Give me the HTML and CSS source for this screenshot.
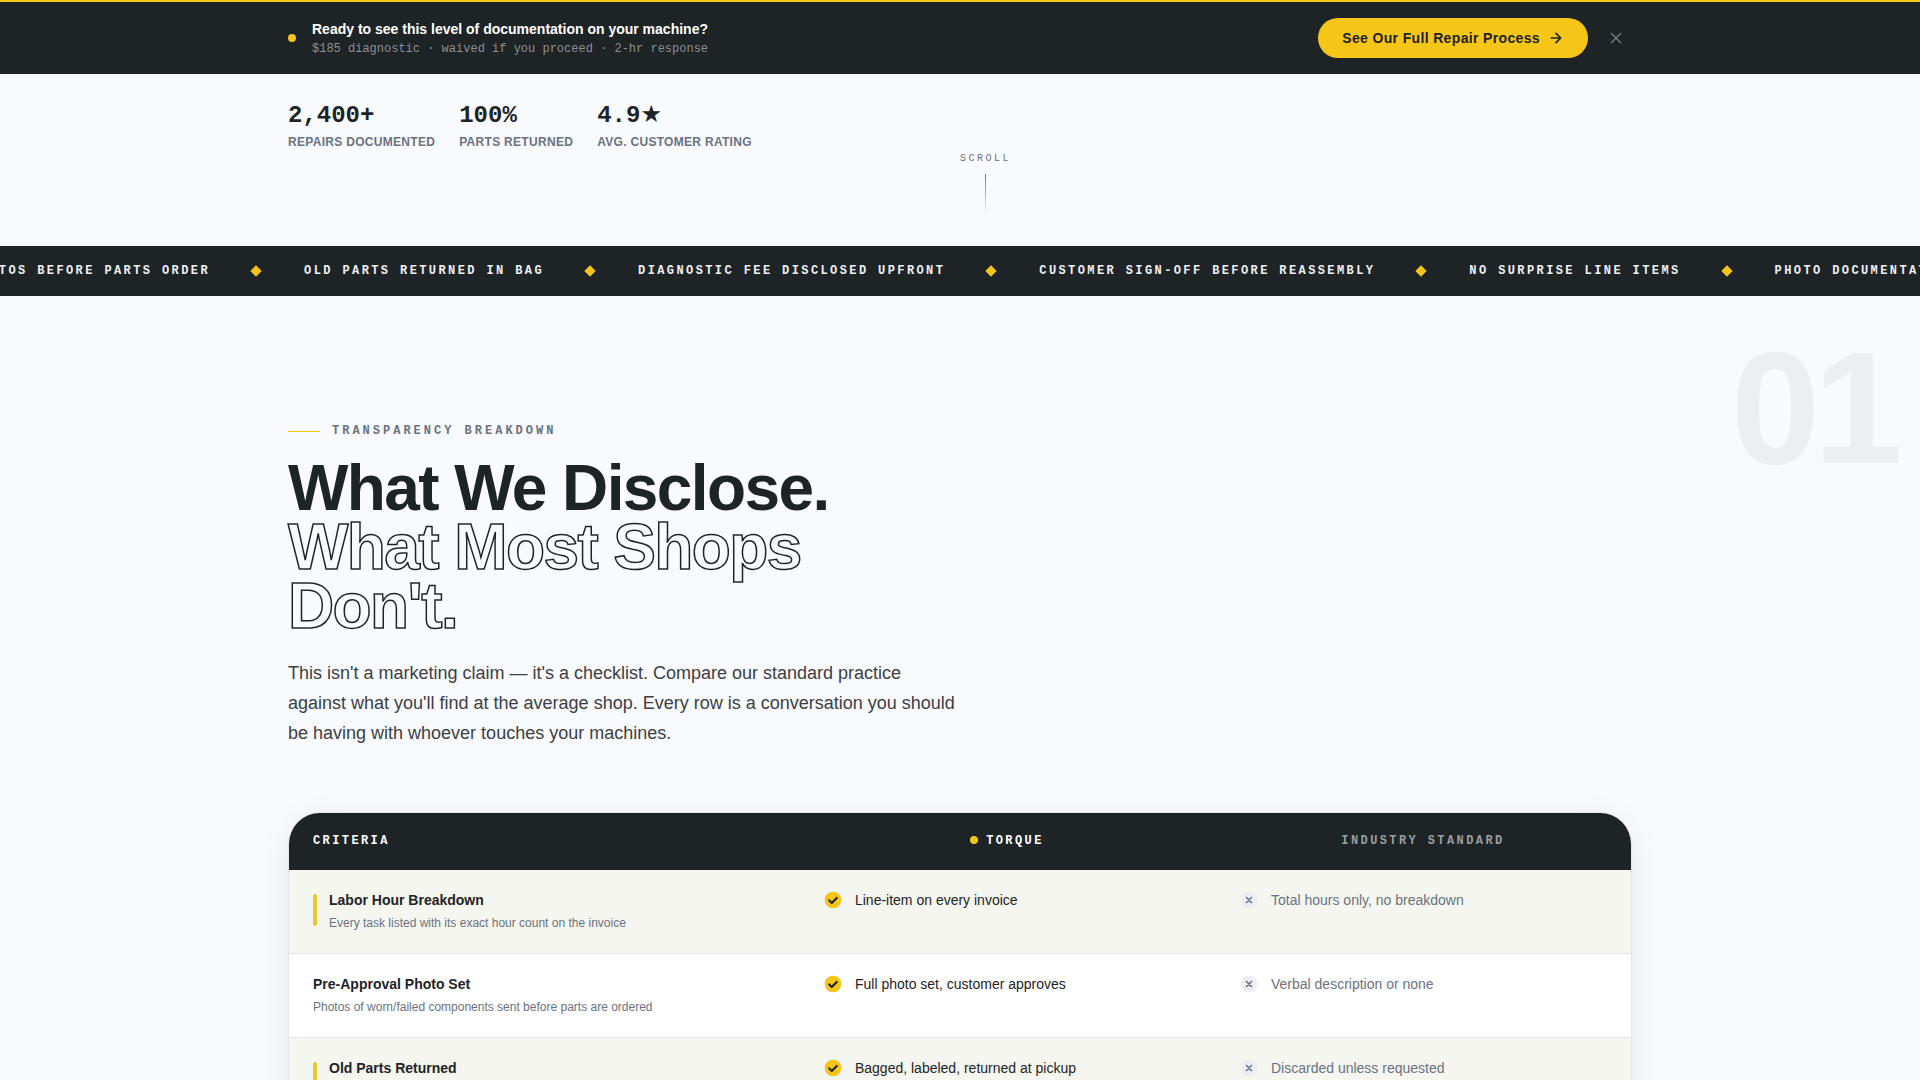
FILE: index.html
```html
<!DOCTYPE html>
<html lang="en">
<head>
  <meta charset="UTF-8" />
  <meta name="viewport" content="width=device-width, initial-scale=1" />
  <title>Torque - Transparency Breakdown</title>
  <link rel="stylesheet" href="styles.css">
</head>
<body>
  <aside class="banner">
    <div class="container banner-inner">
      <span class="dot banner-dot"></span>
      <div class="banner-text">
        <p class="banner-title">Ready to see this level of documentation on your machine?</p>
        <p class="banner-sub">$185 diagnostic · waived if you proceed · 2-hr response</p>
      </div>
      <a class="btn" href="#process">See Our Full Repair Process
        <svg width="16" height="16" viewBox="0 0 24 24" fill="none" stroke="currentColor" stroke-width="2.5" stroke-linecap="round" stroke-linejoin="round"><path d="M5 12h14M12 5l7 7-7 7"/></svg>
      </a>
      <button type="button" class="close" aria-label="Dismiss">
        <svg width="18" height="18" viewBox="0 0 24 24" fill="none" stroke="currentColor" stroke-width="2" stroke-linecap="round"><path d="M6 6l12 12M18 6L6 18"/></svg>
      </button>
    </div>
  </aside>

  <section class="hero">
    <div class="container">
      <ul class="stats">
        <li><strong>2,400+</strong><span>Repairs Documented</span></li>
        <li><strong>100%</strong><span>Parts Returned</span></li>
        <li><strong>4.9★</strong><span>Avg. Customer Rating</span></li>
      </ul>
    </div>
    <div class="scroll-hint">
      <span>SCROLL</span>
      <i class="scroll-line"></i>
    </div>
  </section>

  <div class="marquee">
    <ul class="marquee-track">
      <li>Photos before parts order</li>
      <li>Old parts returned in bag</li>
      <li>Diagnostic fee disclosed upfront</li>
      <li>Customer sign-off before reassembly</li>
      <li>No surprise line items</li>
      <li>Photo documentation</li>
    </ul>
  </div>

  <section class="disclose">
    <span class="section-num" aria-hidden="true">01</span>
    <div class="container">
      <header class="intro">
        <p class="eyebrow">Transparency Breakdown</p>
        <h2>What We Disclose. <span class="outline">What Most Shops Don't.</span></h2>
        <p class="lead">This isn't a marketing claim — it's a checklist. Compare our standard practice against what you'll find at the average shop. Every row is a conversation you should be having with whoever touches your machines.</p>
      </header>

      <div class="card">
        <table>
          <thead>
            <tr>
              <th scope="col" class="col-criteria">Criteria</th>
              <th scope="col" class="col-shop"><span class="dot"></span>Torque</th>
              <th scope="col" class="col-industry">Industry Standard</th>
            </tr>
          </thead>
          <tbody>
            <tr class="key">
              <td><div class="criteria"><div><h3>Labor Hour Breakdown</h3><p>Every task listed with its exact hour count on the invoice</p></div></div></td>
              <td><div class="answer"><svg class="icon" viewBox="0 0 24 24"><use href="#check"/></svg>Line-item on every invoice</div></td>
              <td><div class="answer other"><svg class="icon" viewBox="0 0 24 24"><use href="#cross"/></svg>Total hours only, no breakdown</div></td>
            </tr>
            <tr>
              <td><div class="criteria"><div><h3>Pre-Approval Photo Set</h3><p>Photos of worn/failed components sent before parts are ordered</p></div></div></td>
              <td><div class="answer"><svg class="icon" viewBox="0 0 24 24"><use href="#check"/></svg>Full photo set, customer approves</div></td>
              <td><div class="answer other"><svg class="icon" viewBox="0 0 24 24"><use href="#cross"/></svg>Verbal description or none</div></td>
            </tr>
            <tr class="key">
              <td><div class="criteria"><div><h3>Old Parts Returned</h3><p>Every replaced part bagged and labeled for you</p></div></div></td>
              <td><div class="answer"><svg class="icon" viewBox="0 0 24 24"><use href="#check"/></svg>Bagged, labeled, returned at pickup</div></td>
              <td><div class="answer other"><svg class="icon" viewBox="0 0 24 24"><use href="#cross"/></svg>Discarded unless requested</div></td>
            </tr>
          </tbody>
        </table>
      </div>
    </div>
  </section>

  <svg width="0" height="0" class="sprite">
    <symbol id="check" viewBox="0 0 24 24">
      <circle cx="12" cy="12" r="10" fill="#f5c518"/>
      <path d="M7.5 12.5l3 3 6-6" fill="none" stroke="#1e2326" stroke-width="2.5" stroke-linecap="round" stroke-linejoin="round"/>
    </symbol>
    <symbol id="cross" viewBox="0 0 24 24">
      <circle cx="12" cy="12" r="10" fill="#ededf2"/>
      <path d="M9 9l6 6M15 9l-6 6" fill="none" stroke="#6b7280" stroke-width="2" stroke-linecap="round"/>
    </symbol>
  </svg>
</body>
</html>
```
FILE: styles.css
```css
* { box-sizing: border-box; margin: 0; padding: 0; }
body { font-family: "Liberation Sans", Arial, sans-serif; background: #f8fafe; color: #1e2326; overflow-x: hidden; }
ul { list-style: none; }

.container { max-width: 1440px; margin: 0 auto; padding: 0 48px; }
.dot { display: inline-block; width: 8px; height: 8px; border-radius: 50%; background: #f5c518; }

/* top banner */
.banner { background: #1e2326; border-top: 2px solid #f5c518; }
.banner-inner { display: flex; align-items: center; height: 72px; }
.banner-dot { margin-right: 16px; }
.banner-text { flex: 1; }
.banner-title { font-size: 14px; line-height: 22px; font-weight: 700; color: #fff; }
.banner-sub { font-family: "Liberation Mono", monospace; font-size: 12px; line-height: 18px; color: #8b8f92; }
.btn { display: flex; align-items: center; gap: 8px; height: 40px; padding: 0 24px; border-radius: 20px; background: #f5c518; color: #1e2326; font-size: 14px; font-weight: 700; letter-spacing: 0.025em; text-decoration: none; }
.close { display: flex; align-items: center; justify-content: center; width: 32px; height: 32px; margin-left: 12px; border: 0; background: none; color: #74787a; cursor: pointer; }

/* hero */
.hero { padding: 25px 0 32px; }
.stats { display: flex; gap: 24px; }
.stats strong { display: block; font-family: "Liberation Mono", "DejaVu Sans", monospace; font-size: 24px; line-height: 34px; }
.stats span { display: block; font-size: 12px; line-height: 19px; font-weight: 700; letter-spacing: 0.025em; color: #6b7280; text-transform: uppercase; }
.scroll-hint { display: flex; flex-direction: column; align-items: center; gap: 8px; width: max-content; margin-left: 50%; }
.scroll-hint span { font-family: "Liberation Mono", monospace; font-size: 10px; line-height: 14px; letter-spacing: 0.25em; color: #6b7280; }
.scroll-line { width: 1px; height: 40px; background: linear-gradient(#6b7280, transparent); }

/* marquee */
.marquee { overflow: hidden; background: #1e2326; }
.marquee-track { display: flex; align-items: center; height: 50px; margin-left: -30px; }
.marquee-track li { display: flex; align-items: center; flex: none; font-family: "Liberation Mono", monospace; font-size: 12px; font-weight: 700; letter-spacing: 0.2em; color: #eef0f4; text-transform: uppercase; white-space: nowrap; }
.marquee-track li::after { content: ""; width: 8px; height: 8px; margin: 0 44px 0 42px; background: #f5c518; transform: rotate(45deg); }

/* disclosure section */
.disclose { position: relative; padding: 126px 0 128px; }
.section-num { position: absolute; top: 32px; right: 24px; font-size: 160px; line-height: 1; font-weight: 700; letter-spacing: -0.04em; color: #edeef2; }
.intro { max-width: 672px; margin-bottom: 64px; }
.eyebrow { display: flex; align-items: center; gap: 12px; font-family: "Liberation Mono", monospace; font-size: 12px; line-height: 19px; font-weight: 700; letter-spacing: 0.25em; color: #6b7280; text-transform: uppercase; }
.eyebrow::before { content: ""; width: 32px; height: 1px; background: #f5c518; }
.intro h2 { margin-top: 18px; font-size: 64px; line-height: 59px; font-weight: 700; letter-spacing: -0.025em; }
.outline { display: block; color: transparent; -webkit-text-stroke: 1.5px #1e2326; }
.lead { margin-top: 22px; font-size: 18px; line-height: 30px; color: #3c4043; }

/* comparison table */
.card { border: 1px solid #e5e7eb; border-radius: 32px; overflow: hidden; background: #fff; box-shadow: 0 8px 32px rgba(30, 35, 38, 0.08); }
table { width: 100%; border-collapse: collapse; }
th { padding: 20px 24px; background: #1e2326; color: #fff; font-family: "Liberation Mono", monospace; font-size: 12px; line-height: 17px; font-weight: 700; letter-spacing: 0.2em; text-transform: uppercase; }
th .dot { margin-right: 8px; }
.col-criteria { width: 38%; text-align: left; }
.col-shop { width: 31%; }
.col-industry { width: 31%; color: #9a9ea1; }
td { padding: 20px 24px 21px; vertical-align: top; border-bottom: 1px solid #e5e7eb; }
.key td { background: #f5f6f0; }
.criteria { display: flex; gap: 12px; }
.key .criteria::before { content: ""; width: 4px; height: 32px; margin-top: 4px; border-radius: 2px; background: #ebc62c; }
.criteria h3 { font-size: 14px; line-height: 20px; }
.criteria p { margin-top: 4px; font-size: 12px; line-height: 18px; color: #6b7280; }
.answer { display: flex; align-items: center; gap: 12px; font-size: 14px; line-height: 20px; }
.other { color: #6b7280; }
.icon { width: 20px; height: 20px; }
.sprite { display: block; }
```
